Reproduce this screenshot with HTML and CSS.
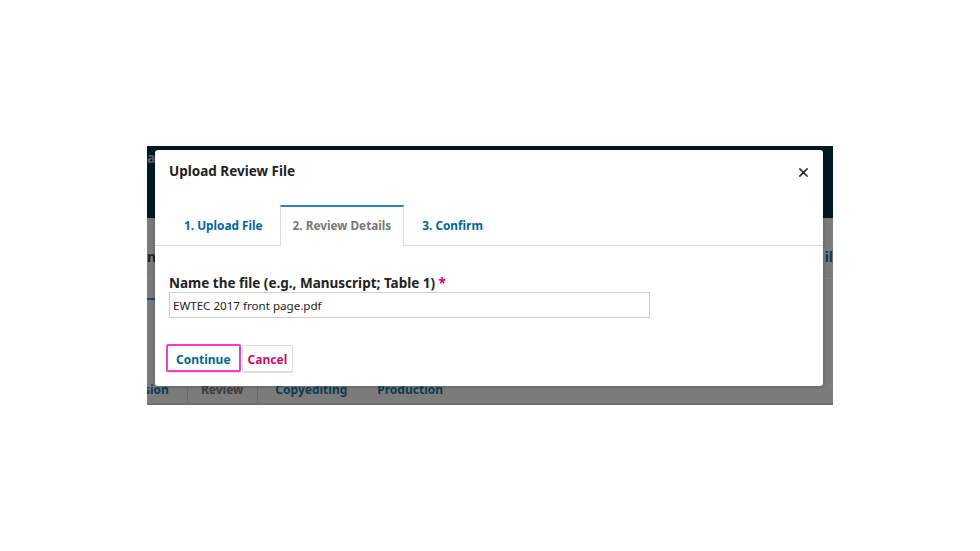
FILE: index.html
```html
<!DOCTYPE html>
<html>
<head>
  <title>Upload Review File</title>
  <link rel="stylesheet" href="styles.css">
</head>
<body>

  <div class="screen">
    <div class="page-header">
      <span class="edge-text">al</span>
    </div>
    <div class="page-body">
      <div class="page-row">
        <span class="edge-text dark">nt</span>
        <span class="edge-text blue right">il</span>
      </div>
      <div class="page-line"></div>
      <div class="page-tabs">
        <span class="ptab blue first">sion</span>
        <span class="ptab grey">Review</span>
        <span class="ptab blue copy">Copyediting</span>
        <span class="ptab blue">Production</span>
      </div>
    </div>

    <div class="modal">
      <div class="modal-header">
        <h2>Upload Review File</h2>
        <button type="button" class="close-btn" aria-label="Close">
          <svg width="9" height="9" viewBox="0 0 9 9">
            <path d="M1 1 L8 8 M8 1 L1 8" stroke="#222" stroke-width="1.6" stroke-linecap="square"/>
          </svg>
        </button>
      </div>

      <ul class="tabs">
        <li class="tab">1. Upload File</li>
        <li class="tab active">2. Review Details</li>
        <li class="tab">3. Confirm</li>
      </ul>

      <form class="modal-body">
        <label for="name">Name the file (e.g., Manuscript; Table 1) <span class="req">*</span></label>
        <input id="name" type="text" value="EWTEC 2017 front page.pdf">

        <div class="buttons">
          <button type="submit" class="btn continue">Continue</button>
          <button type="button" class="btn cancel">Cancel</button>
        </div>
      </form>
    </div>
  </div>

</body>
</html>
```

FILE: styles.css
```css
body {
  margin: 0;
  background-color: #fff;
  font-family: "Noto Sans", sans-serif;
  color: #222;
}

.screen {
  position: relative;
  width: 686px;
  height: 259px;
  margin: 146px 0 0 147px;
  display: flex;
  flex-direction: column;
  overflow: hidden;
}

/* page behind the modal, dimmed */
.page-header {
  height: 72px;
  background-color: #011923;
}

.page-body {
  flex: 1;
  background-color: #7b7b7b;
  display: flex;
  flex-direction: column;
  border-bottom: 2px solid #707070;
}

.edge-text {
  font-size: 14px;
  font-weight: bold;
  color: #5c6469;
  line-height: 20px;
}

.edge-text.dark {
  color: #222;
}

.edge-text.blue {
  color: #0d3b55;
}

.page-row {
  display: flex;
  justify-content: space-between;
  padding-top: 29px;
  padding-bottom: 11px;
  border-bottom: 1px solid #838383;
}

.page-line {
  width: 8px;
  height: 2px;
  background-color: #1c4a66;
  margin-top: 19px;
}

.page-tabs {
  margin-top: auto;
  display: flex;
  height: 30px;
  align-items: stretch;
}

.ptab {
  font-size: 12px;
  font-weight: bold;
  line-height: 30px;
  padding: 2px 16px 0;
}

.ptab.first {
  margin-left: -3px;
  padding: 2px 18px 0 0;
  border-right: 1px solid #6c6c6c;
}

.ptab.grey {
  color: #3c3c3c;
  padding: 2px 14px 0 13px;
  border-right: 1px solid #6c6c6c;
}

.ptab.copy {
  padding-left: 17px;
  padding-right: 14px;
}

.ptab.blue {
  color: #0d3b55;
}

/* modal */
.modal {
  position: absolute;
  left: 8px;
  top: 4px;
  width: 668px;
  height: 236px;
  background-color: #fff;
  border-radius: 3px;
  box-shadow: 0 0 4px rgba(0, 0, 0, 0.3);
}

.modal-header {
  height: 55px;
  padding: 11px 14px 0;
  box-sizing: border-box;
  display: flex;
  justify-content: space-between;
}

.modal-header h2 {
  margin: 0;
  font-size: 13.5px;
  font-weight: bold;
  line-height: 20px;
  color: #222;
}

.close-btn {
  border: none;
  background: none;
  padding: 0;
  width: 9px;
  height: 9px;
  margin: 4px 1px 0 0;
}

.tabs {
  list-style: none;
  margin: 0;
  padding: 0 0 0 15px;
  display: flex;
  height: 40px;
  border-bottom: 1px solid #ddd;
}

.tab {
  font-size: 11.8px;
  font-weight: bold;
  color: #006798;
  line-height: 39px;
  padding: 0 13px;
  margin-right: 3px;
  border: 1px solid transparent;
  border-bottom: none;
  box-sizing: border-box;
  height: 41px;
}

.tab.active {
  color: #777;
  background-color: #fff;
  border-color: #ddd;
  border-top: 2px solid #2d83b8;
  line-height: 37px;
  padding: 0 12px;
  margin-right: 4px;
}

.modal-body {
  padding: 28px 14px 0;
}

label {
  display: block;
  font-size: 13.5px;
  font-weight: bold;
  line-height: 18px;
}

.req {
  color: #e0007d;
}

input {
  display: block;
  width: 481px;
  height: 26px;
  box-sizing: border-box;
  border: 1px solid #ccc;
  padding: 0 3px;
  font-family: "Noto Sans", sans-serif;
  font-size: 11.6px;
  color: #222;
}

.buttons {
  display: flex;
  gap: 1px;
  margin: 26px 0 0 -3px;
  align-items: flex-end;
}

.btn {
  font-family: "Noto Sans", sans-serif;
  font-size: 12px;
  font-weight: bold;
  background-color: #fff;
  border: 1px solid #ddd;
  border-radius: 2px;
  box-shadow: 0 1px 0 #ddd;
  padding-top: 3px;
}

.continue {
  color: #006798;
  height: 28px;
  border: 2px solid #f23ccb;
  padding-left: 8px;
  padding-right: 8px;
}

.cancel {
  color: #d00a6c;
  height: 27px;
  padding-left: 5px;
  padding-right: 5px;
}
```
